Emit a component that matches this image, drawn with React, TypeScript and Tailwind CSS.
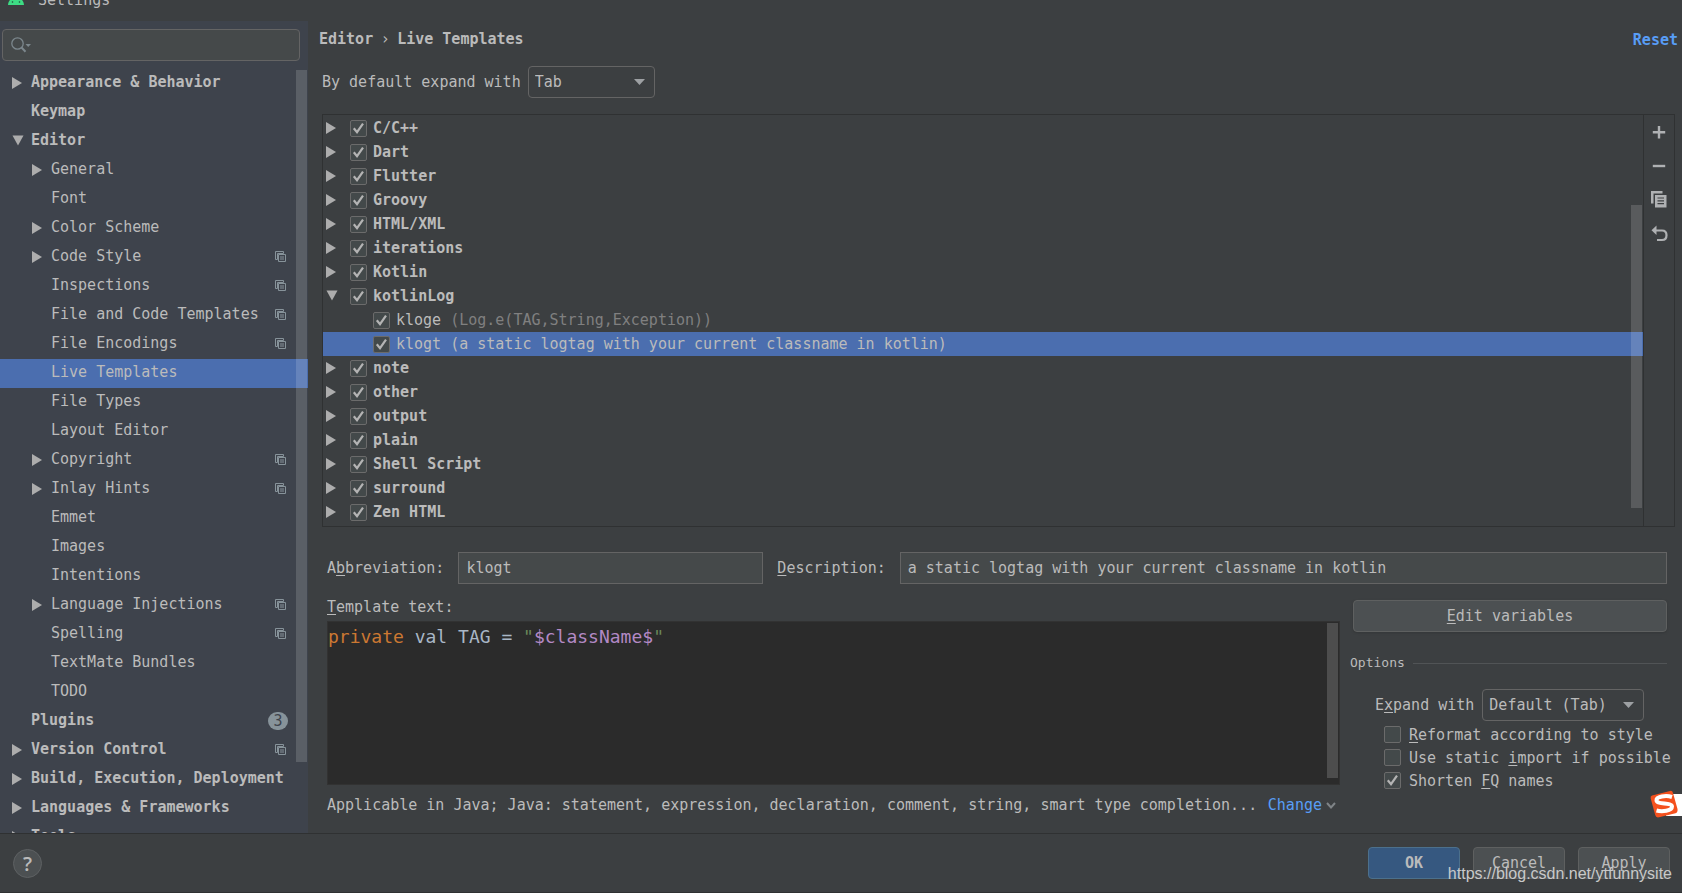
import React, { useState } from 'react';

interface NavItem {
  label: string;
  level: 0 | 1;
  arrow?: 'right' | 'down';
  project?: boolean;
  badge?: string;
}

interface TemplateItem {
  label: string;
  hint?: string;
  child?: boolean;
  open?: boolean;
}

const NAV_ITEMS: NavItem[] = [
  { label: 'Appearance & Behavior', level: 0, arrow: 'right' },
  { label: 'Keymap', level: 0 },
  { label: 'Editor', level: 0, arrow: 'down' },
  { label: 'General', level: 1, arrow: 'right' },
  { label: 'Font', level: 1 },
  { label: 'Color Scheme', level: 1, arrow: 'right' },
  { label: 'Code Style', level: 1, arrow: 'right', project: true },
  { label: 'Inspections', level: 1, project: true },
  { label: 'File and Code Templates', level: 1, project: true },
  { label: 'File Encodings', level: 1, project: true },
  { label: 'Live Templates', level: 1 },
  { label: 'File Types', level: 1 },
  { label: 'Layout Editor', level: 1 },
  { label: 'Copyright', level: 1, arrow: 'right', project: true },
  { label: 'Inlay Hints', level: 1, arrow: 'right', project: true },
  { label: 'Emmet', level: 1 },
  { label: 'Images', level: 1 },
  { label: 'Intentions', level: 1 },
  { label: 'Language Injections', level: 1, arrow: 'right', project: true },
  { label: 'Spelling', level: 1, project: true },
  { label: 'TextMate Bundles', level: 1 },
  { label: 'TODO', level: 1 },
  { label: 'Plugins', level: 0, badge: '3' },
  { label: 'Version Control', level: 0, arrow: 'right', project: true },
  { label: 'Build, Execution, Deployment', level: 0, arrow: 'right' },
  { label: 'Languages & Frameworks', level: 0, arrow: 'right' },
  { label: 'Tools', level: 0, arrow: 'right' },
];

const TEMPLATES: TemplateItem[] = [
  { label: 'C/C++' },
  { label: 'Dart' },
  { label: 'Flutter' },
  { label: 'Groovy' },
  { label: 'HTML/XML' },
  { label: 'iterations' },
  { label: 'Kotlin' },
  { label: 'kotlinLog', open: true },
  { label: 'kloge', hint: '(Log.e(TAG,String,Exception))', child: true },
  { label: 'klogt', hint: '(a static logtag with your current classname in kotlin)', child: true },
  { label: 'note' },
  { label: 'other' },
  { label: 'output' },
  { label: 'plain' },
  { label: 'Shell Script' },
  { label: 'surround' },
  { label: 'Zen HTML' },
];

const Arrow: React.FC<{ direction?: 'right' | 'down' }> = ({ direction }) => (
  <svg className="w-3 h-3 shrink-0" viewBox="0 0 12 12" fill="#adadad" aria-hidden="true">
    {direction === 'right' && <path d="M0 0 L10 6 L0 12 Z" />}
    {direction === 'down' && <path d="M0.5 0.5 H11.5 L6 10.5 Z" />}
  </svg>
);

const ProjectIcon = () => (
  <svg className="w-[11px] h-[11px] shrink-0" viewBox="0 0 11 11" fill="none" stroke="#87939a" aria-hidden="true">
    <path d="M2.5 8.5 H0.5 V0.5 H8.5 V2.5 H2.5 Z" />
    <path d="M3.5 3.5 H10.5 V10.5 H3.5 Z" fill="#3e434c" />
    <path d="M5 6 H9 M5 8 H9" />
  </svg>
);

interface CheckboxProps {
  id: string;
  checked: boolean;
  onChange: () => void;
}

const Checkbox: React.FC<CheckboxProps> = ({ id, checked, onChange }) => (
  <span className="grid w-[17px] h-[17px] shrink-0">
    <input
      id={id}
      type="checkbox"
      checked={checked}
      onChange={onChange}
      className="col-start-1 row-start-1 w-[17px] h-[17px] appearance-none rounded-xs border border-[#6b6b6b] bg-[#43494a]"
    />
    {checked && (
      <svg className="col-start-1 row-start-1 pointer-events-none" viewBox="0 0 17 17" fill="none" stroke="#b4b4b4" strokeWidth="2.2" aria-hidden="true">
        <path d="M3.8 8.3 L7 12.2 L13 3.6" />
      </svg>
    )}
  </span>
);

const SelectArrow = () => (
  <svg className="col-start-1 row-start-1 self-center justify-self-end mr-2.5 w-[11px] h-1.5 pointer-events-none" viewBox="0 0 11 6" fill="#9da0a3" aria-hidden="true">
    <path d="M0 0 H11 L5.5 6 Z" />
  </svg>
);

const Sidebar = () => {
  const [active, setActive] = useState('Live Templates');

  return (
    <aside className="w-77 shrink-0 flex flex-col bg-[#3e434c]">
      <label className="flex items-center h-8 mt-2 ml-0.5 mr-2 pl-2 rounded border border-[#646464] bg-[#45494a]">
        <svg className="w-5 h-4 shrink-0" viewBox="0 0 20 16" fill="none" stroke="#7c878d" aria-hidden="true">
          <circle cx="6.5" cy="6.5" r="5.7" strokeWidth="1.3" />
          <path d="M10.5 10.5 L14.5 14.8" strokeWidth="2" />
          <path d="M14.5 7 H20 L17.2 10 Z" fill="#7c878d" stroke="none" />
        </svg>
        <input type="search" aria-label="Search settings" className="flex-1 min-w-0 bg-transparent outline-none" />
      </label>

      <div className="flex-1 min-h-0 mt-2 grid overflow-hidden">
        <ul className="col-start-1 row-start-1 min-h-0">
          {NAV_ITEMS.map((item) => (
            <li key={item.label}>
              <button
                onClick={() => setActive(item.label)}
                className={`w-full h-[29px] flex items-center gap-[7px] pr-[22px] pb-0.5 text-left ${item.level === 0 ? 'pl-3 font-bold' : 'pl-8'} ${active === item.label ? 'bg-[#4b6eaf]' : ''}`}
              >
                <Arrow direction={item.arrow} />
                <span className="flex-1 whitespace-nowrap pb-0.5">{item.label}</span>
                {item.project && <ProjectIcon />}
                {item.badge && (
                  <span className="w-5 h-[18px] -mr-0.5 rounded-full bg-[#87939a] text-[#3e434c] font-normal leading-[18px] text-center">{item.badge}</span>
                )}
              </button>
            </li>
          ))}
        </ul>
        <div className="col-start-1 row-start-1 justify-self-end mt-px mr-px w-[11px] h-[692px] bg-white/15 pointer-events-none" />
      </div>
    </aside>
  );
};

const TemplateList = () => {
  const [selected, setSelected] = useState('klogt');
  const [disabled, setDisabled] = useState<string[]>([]);

  const toggle = (label: string) => {
    setDisabled((prev) => (prev.includes(label) ? prev.filter((l) => l !== label) : [...prev, label]));
  };

  return (
    <div className="flex mt-4 ml-3.5 mr-[7px] border border-[#2f3132]">
      <div className="flex-1 min-w-0 grid">
        <ul className="col-start-1 row-start-1 pt-px pb-0.5">
          {TEMPLATES.map((item) => (
            <li
              key={item.label}
              onClick={() => setSelected(item.label)}
              className={`h-6 flex items-center ${item.child ? 'pl-[50px]' : 'pl-[3px]'} ${selected === item.label ? 'bg-[#4b6eaf]' : ''}`}
            >
              {!item.child && (
                <button aria-label={`Expand ${item.label}`} className="mr-3">
                  <Arrow direction={item.open ? 'down' : 'right'} />
                </button>
              )}
              <Checkbox id={`template-${item.label}`} checked={!disabled.includes(item.label)} onChange={() => toggle(item.label)} />
              <label htmlFor={`template-${item.label}`} className={`pl-1.5 whitespace-pre ${item.child ? '' : 'font-bold'}`}>
                {item.label}
                {item.hint && <span className={selected === item.label ? '' : 'text-[#808080]'}> {item.hint}</span>}
              </label>
            </li>
          ))}
        </ul>
        <div className="col-start-1 row-start-1 justify-self-end mt-[90px] mr-px w-[11px] h-[303px] bg-white/15 pointer-events-none" />
      </div>
      <div className="w-[31px] flex flex-col items-center gap-4 pt-2 border-l border-[#2f3132]">
        <button aria-label="Add">
          <svg className="w-[18px] h-[18px]" viewBox="0 0 18 18" stroke="#afb1b3" strokeWidth="2.4" aria-hidden="true">
            <path d="M9 3 V15.4 M2.8 9.2 H15.2" />
          </svg>
        </button>
        <button aria-label="Remove">
          <svg className="w-[18px] h-[18px]" viewBox="0 0 18 18" stroke="#afb1b3" strokeWidth="2.4" aria-hidden="true">
            <path d="M2.8 9 H15.2" />
          </svg>
        </button>
        <button aria-label="Duplicate">
          <svg className="w-[18px] h-[18px]" viewBox="0 0 18 18" aria-hidden="true">
            <path d="M1 0 H12.5 V2.5 H3.5 V12.5 H1 Z" fill="#afb1b3" />
            <path d="M5 4 H16.5 V16.5 H5 Z" fill="#afb1b3" />
            <path d="M7.5 7 H14 M7.5 9.8 H14 M7.5 12.6 H14" stroke="#3c3f41" strokeWidth="1.2" />
          </svg>
        </button>
        <button aria-label="Revert">
          <svg className="w-[18px] h-[18px]" viewBox="0 0 18 18" aria-hidden="true">
            <path d="M6.5 0.5 V10 L1.5 5.3 Z" fill="#afb1b3" />
            <path d="M5 5.5 H12 C15 5.5 16.5 7.5 16.5 10.2 C16.5 13 15 15 12 15 H7" fill="none" stroke="#afb1b3" strokeWidth="2.2" />
          </svg>
        </button>
      </div>
    </div>
  );
};

const Options = () => {
  const [reformat, setReformat] = useState(false);
  const [staticImport, setStaticImport] = useState(false);
  const [shorten, setShorten] = useState(true);

  return (
    <div className="w-[317px] shrink-0 flex flex-col pt-4">
      <button className="h-8 ml-[3px] rounded border border-[#5e6060] bg-[#4c5052] shadow-sm">
        <u className="underline-offset-2">E</u>dit variables
      </button>
      <div className="flex items-center gap-2 h-5 mt-[21px] text-[13px]">
        <span>Options</span>
        <span className="flex-1 h-px bg-[#515456]" />
      </div>
      <div className="flex items-center mt-4 ml-[25px] gap-2">
        <label htmlFor="expand-with">E<u className="underline-offset-2">x</u>pand with</label>
        <span className="grid">
          <select id="expand-with" className="col-start-1 row-start-1 w-[162px] h-8 pl-1.5 appearance-none rounded border border-[#646464]">
            <option>Default (Tab)</option>
          </select>
          <SelectArrow />
        </span>
      </div>
      <div className="flex flex-col mt-0.5 ml-[34px] whitespace-nowrap">
        <div className="flex items-center gap-2 h-[23px]">
          <Checkbox id="reformat" checked={reformat} onChange={() => setReformat(!reformat)} />
          <label htmlFor="reformat"><u className="underline-offset-2">R</u>eformat according to style</label>
        </div>
        <div className="flex items-center gap-2 h-[23px]">
          <Checkbox id="static-import" checked={staticImport} onChange={() => setStaticImport(!staticImport)} />
          <label htmlFor="static-import">Use static <u className="underline-offset-2">i</u>mport if possible</label>
        </div>
        <div className="flex items-center gap-2 h-[23px]">
          <Checkbox id="shorten" checked={shorten} onChange={() => setShorten(!shorten)} />
          <label htmlFor="shorten">Shorten <u className="underline-offset-2">F</u>Q names</label>
        </div>
      </div>
    </div>
  );
};

const TemplateForm = () => (
  <div className="flex-1 min-h-0 flex flex-col mt-[25px] ml-[19px] mr-[15px]">
    <div className="flex items-center">
      <label htmlFor="abbreviation">A<u className="underline-offset-2">b</u>breviation:</label>
      <input id="abbreviation" defaultValue="klogt" className="flex-5 min-w-0 h-8 ml-3.5 px-[7px] border border-[#646464] bg-[#45494a]" />
      <label htmlFor="description" className="ml-3.5"><u className="underline-offset-2">D</u>escription:</label>
      <input
        id="description"
        defaultValue="a static logtag with your current classname in kotlin"
        className="flex-13 min-w-0 h-8 ml-3.5 px-[7px] border border-[#646464] bg-[#45494a]"
      />
    </div>
    <div className="flex-1 min-h-0 flex gap-2.5">
      <div className="flex-1 min-w-0 flex flex-col">
        <span id="template-text" className="h-[37px] pt-[13px]"><u className="underline-offset-2">T</u>emplate text:</span>
        <div className="flex-1 min-h-0 flex border border-[#323232] bg-[#2b2b2b]">
          <div
            role="textbox"
            aria-multiline="true"
            aria-labelledby="template-text"
            contentEditable
            suppressContentEditableWarning
            className="flex-1 pt-0.5 text-lg leading-[25px] whitespace-pre text-[#a9b7c6] outline-none"
          >
            <span className="text-[#cc7832]">private</span> val TAG = <span className="text-[#6a8759]">"</span>
            <span className="text-[#b389c5]">$className$</span>
            <span className="text-[#6a8759]">"</span>
          </div>
          <div className="w-[11px] mt-px mb-1.5 mr-px bg-[#4d4d4d]" />
        </div>
        <div className="h-12 flex items-start pt-2.5 whitespace-nowrap">
          <span>Applicable in Java; Java: statement, expression, declaration, comment, string, smart type completion...</span>
          <button className="flex items-center gap-1 ml-auto pr-1 text-[#589df6]">
            Change
            <svg className="w-2.5 h-2.5" viewBox="0 0 10 10" fill="none" stroke="#7f8487" strokeWidth="2" aria-hidden="true">
              <path d="M1 3 L5 7.5 L9 3" />
            </svg>
          </button>
        </div>
      </div>
      <Options />
    </div>
  </div>
);

const Footer = () => (
  <footer className="relative h-15 shrink-0 flex items-center gap-[13px] pl-[13px] pr-3 border-y border-[#2f3132]">
    <button aria-label="Help" className="w-[29px] h-[29px] mr-auto rounded-full border border-[#5e6163] bg-[#4c5052] font-['Open_Sans',sans-serif] text-xl leading-[27px] font-semibold">?</button>
    <button className="w-[92px] h-8 rounded border border-[#4c708c] bg-[#365880] font-bold">OK</button>
    <button className="w-[92px] h-8 rounded border border-[#5e6060] bg-[#4c5052]">Cancel</button>
    <button className="w-[92px] h-8 rounded border border-[#5e6060] bg-[#4c5052]"><u className="underline-offset-2">A</u>pply</button>
    <span className="absolute right-2.5 bottom-1.5 font-['Liberation_Sans',sans-serif] text-base text-[#c8c9c9] pointer-events-none">https://blog.csdn.net/ytfunnysite</span>
  </footer>
);

// Input method badge docked at the right edge of the window
const ImeBadge = () => (
  <svg className="absolute right-0 bottom-[75px] w-8 h-7" viewBox="0 0 32 28" aria-hidden="true">
    <path d="M16 4 H32 V26 H16 Z" fill="#fff" />
    <path d="M2 5.5 L20 1 Q22.3 0.3 23 3 L27.5 19 Q28 22.5 25.5 23.3 L9 27.3 Q6 28 5.2 25 L0.7 8.5 Q0.2 6 2 5.5 Z" fill="#f4511e" />
    <path d="M22 7 C16 5 6 6.5 6.5 10.5 C7 15 22 12 22 16.5 C22 21 12 22 6.5 20.5" fill="none" stroke="#fff" strokeWidth="4" />
  </svg>
);

const App: React.FC = () => (
  <div className="relative h-screen flex flex-col overflow-hidden bg-[#3c3f41] text-[#bbbbbb] font-['DejaVu_Sans_Mono',monospace] text-[15px] leading-5">
    <header className="h-[21px] shrink-0 overflow-hidden">
      <div className="flex items-center gap-3.5 -mt-2.5 pl-2">
        <svg className="w-4 h-3" viewBox="0 0 16 12" aria-hidden="true">
          <path d="M0 11 C0.3 7.5 2 5.5 4 4.3 L2.6 2 L3.3 1.6 L4.8 4 Q8 2.6 11.2 4 L12.7 1.6 L13.4 2 L12 4.3 C14 5.5 15.7 7.5 16 11 Z" fill="#3ddc84" />
          <circle cx="4.5" cy="8" r="0.8" fill="#24473a" />
          <circle cx="11.5" cy="8" r="0.8" fill="#24473a" />
        </svg>
        <span>Settings</span>
      </div>
    </header>
    <div className="flex-1 min-h-0 flex">
      <Sidebar />
      <main className="flex-1 min-w-0 flex flex-col">
        <div className="flex items-center h-5 mt-2 pl-[11px] pr-1 font-bold">
          <h1 className="flex items-center">
            Editor<span className="w-6 text-center font-normal">›</span>Live Templates
          </h1>
          <a href="#reset" className="ml-auto pt-0.5 text-[#589df6]">Reset</a>
        </div>
        <div className="flex items-center gap-[7px] mt-[17px] pl-3.5">
          <label htmlFor="default-expand">By default expand with</label>
          <span className="grid">
            <select id="default-expand" className="col-start-1 row-start-1 w-[127px] h-8 pl-1.5 appearance-none rounded border border-[#646464]">
              <option>Tab</option>
            </select>
            <SelectArrow />
          </span>
        </div>
        <TemplateList />
        <TemplateForm />
      </main>
    </div>
    <Footer />
    <ImeBadge />
  </div>
);

export default App;
